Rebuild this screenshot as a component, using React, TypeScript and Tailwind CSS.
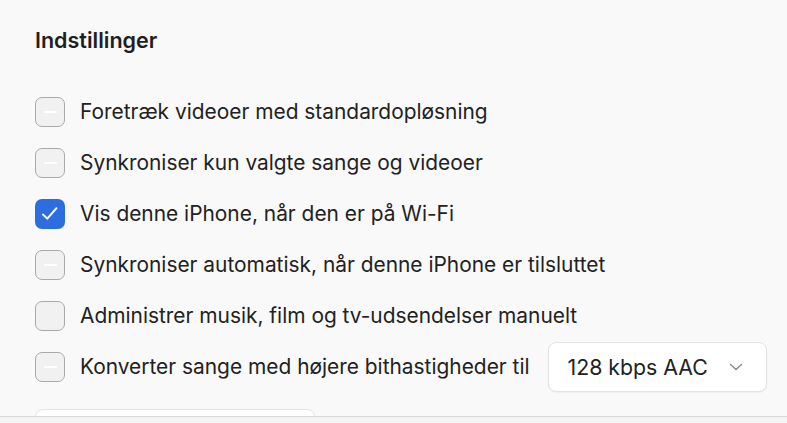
import React from "react";

type Row = { label: string; checked?: boolean; dash?: boolean; select?: boolean };

const rows: Row[] = [
  { label: "Foretræk videoer med standardopløsning", dash: true },
  { label: "Synkroniser kun valgte sange og videoer", dash: true },
  { label: "Vis denne iPhone, når den er på Wi-Fi", checked: true },
  { label: "Synkroniser automatisk, når denne iPhone er tilsluttet", dash: true },
  { label: "Administrer musik, film og tv-udsendelser manuelt" },
  { label: "Konverter sange med højere bithastigheder til", dash: true, select: true },
];

function Box({ checked, dash }: { checked?: boolean; dash?: boolean }) {
  if (checked) {
    return (
      <div className="flex h-[30px] w-[30px] shrink-0 items-center justify-center rounded-[7px] bg-[#2c6ee0]">
        <svg width="30" height="30" viewBox="0 0 30 30" fill="none">
          <path d="M8 15.5 L12.3 19.6 L21.5 9.2" stroke="white" strokeWidth="2" strokeLinecap="round" strokeLinejoin="round" />
        </svg>
      </div>
    );
  }
  return (
    <div className="flex h-[30px] w-[30px] shrink-0 items-center justify-center rounded-[7px] border-[1.5px] border-[#a9a9a9] bg-[#f1f1f1]">
      {dash ? <div className="h-[2px] w-[13px] rounded-full bg-white" /> : null}
    </div>
  );
}

export default function App() {
  return (
    <div
      className="flex h-[423px] w-[787px] flex-col overflow-hidden bg-[#f9f9f9] text-[#222222]"
      style={{ fontFamily: "Inter, 'Liberation Sans', sans-serif" }}
    >
      <div className="flex-1 overflow-hidden pl-[35px]">
        <h1 className="mt-[27px] text-[21.5px] font-semibold leading-[26px] text-[#1f1f1f]">
          Indstillinger
        </h1>
        <div className="mt-[33px] flex flex-col">
          {rows.map((r) => (
            <div key={r.label} className="flex h-[51px] items-center">
              <Box checked={r.checked} dash={r.dash} />
              <span className="ml-[15px] text-[20.9px] leading-[26px] text-[#222222]">{r.label}</span>
              {r.select ? (
                <div className="ml-[18px] flex h-[50px] w-[219px] items-center justify-between rounded-[8px] border border-[#e2e2e2] bg-white pl-[19px] pr-[23px] shadow-[0_1px_1px_rgba(0,0,0,0.04)]">
                  <span className="text-[21.3px] leading-[26px] text-[#222222]">128 kbps AAC</span>
                  <svg width="14" height="8" viewBox="0 0 14 8" fill="none">
                    <path d="M1.5 1.5 L7 6.5 L12.5 1.5" stroke="#8a8a8a" strokeWidth="1.4" strokeLinecap="round" strokeLinejoin="round" />
                  </svg>
                </div>
              ) : null}
            </div>
          ))}
        </div>
        <div className="mt-[17px] h-[20px] w-[280px] rounded-[8px] border border-[#e4e4e4] bg-white" />
      </div>
      <div className="h-[7px] shrink-0 border-t-[1.5px] border-[#d9d9d9] bg-[#f4f4f4]" />
    </div>
  );
}
